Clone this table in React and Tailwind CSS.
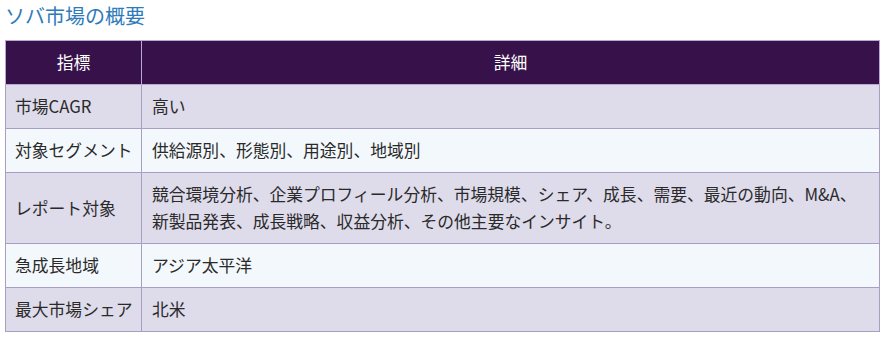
export default function App() {
  const rows = [
    ["市場CAGR", "高い"],
    ["対象セグメント", "供給源別、形態別、用途別、地域別"],
    [
      "レポート対象",
      <>
        競合環境分析、企業プロフィール分析、市場規模、シェア、成長、需要、最近の動向、M&A、
        <br />
        新製品発表、成長戦略、収益分析、その他主要なインサイト。
      </>,
    ],
    ["急成長地域", "アジア太平洋"],
    ["最大市場シェア", "北米"],
  ];
  return (
    <div
      className="w-[885px] h-[337px] bg-white pl-[5px] pr-[5px]"
      style={{ fontFamily: '"Noto Sans CJK JP", "Noto Sans", sans-serif' }}
    >
      <h2 className="text-[20px] leading-[26px] pt-[3px] text-[#2e7bbb] font-normal">
        ソバ市場の概要
      </h2>
      <table className="mt-[11px] w-[875px] border-collapse text-[16.8px] text-[#2a2a2a]">
        <thead>
          <tr className="bg-[#37124a] text-white">
            <th className="w-[136px] border border-[#b9a8d2] h-[44px] font-normal text-center">
              指標
            </th>
            <th className="border border-[#b9a8d2] font-normal text-center">詳細</th>
          </tr>
        </thead>
        <tbody>
          {rows.map((r, i) => (
            <tr key={i} className={i % 2 === 0 ? "bg-[#dedbea]" : "bg-[#f3f8fc]"}>
              <td className="border border-[#a89dc2] pl-[9px] pr-[8px] py-[8px] leading-[27px] align-middle whitespace-nowrap">
                {r[0]}
              </td>
              <td className="border border-[#a89dc2] pl-[10px] pr-[8px] py-[8px] leading-[27px] align-middle whitespace-nowrap">
                {r[1]}
              </td>
            </tr>
          ))}
        </tbody>
      </table>
    </div>
  );
}
